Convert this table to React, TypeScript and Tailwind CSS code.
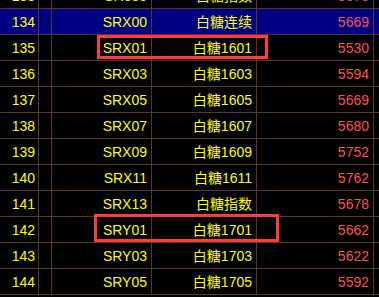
const rows = [
  { no: "133", code: "SR000", name: "白糖指数", price: "5670" },
  { no: "134", code: "SRX00", name: "白糖连续", price: "5669", active: true },
  { no: "135", code: "SRX01", name: "白糖1601", price: "5530" },
  { no: "136", code: "SRX03", name: "白糖1603", price: "5594" },
  { no: "137", code: "SRX05", name: "白糖1605", price: "5669" },
  { no: "138", code: "SRX07", name: "白糖1607", price: "5680" },
  { no: "139", code: "SRX09", name: "白糖1609", price: "5752" },
  { no: "140", code: "SRX11", name: "白糖1611", price: "5762" },
  { no: "141", code: "SRX13", name: "白糖指数", price: "5678" },
  { no: "142", code: "SRY01", name: "白糖1701", price: "5662" },
  { no: "143", code: "SRY03", name: "白糖1703", price: "5622" },
  { no: "144", code: "SRY05", name: "白糖1705", price: "5592" },
];

const cell = "h-full flex items-center justify-end border-r border-[#5a3826]";

export default function App() {
  return (
    <div className="relative w-[379px] h-[297px] overflow-hidden bg-black text-[14px] leading-none text-[#ffff00] font-['Liberation_Sans','Noto_Sans_CJK_SC',sans-serif]">
      <div className="-mt-[17px]">
        {rows.map((r) => (
          <div
            key={r.no}
            className={`flex h-[26px] border-b border-[#5a3826] ${r.active ? "bg-[#000080]" : ""}`}
          >
            <div className={`${cell} w-[39px] pr-[3px]`}>{r.no}</div>
            <div className={`${cell} w-[13px]`} />
            <div className={`${cell} w-[100px] pr-[4px]`}>{r.code}</div>
            <div className={`${cell} w-[105px] pr-[4px]`}>{r.name}</div>
            <div className={`${cell} w-[117px] pr-[4px] text-[#ff5050]`}>{r.price}</div>
          </div>
        ))}
      </div>

      {/* highlight boxes */}
      <div className="absolute left-[97px] top-[35px] w-[171px] h-[24px] border-[3px] border-[#ff3b3b]" />
      <div className="absolute left-[94px] top-[214px] w-[185px] h-[28px] border-[3px] border-[#ff3b3b]" />
    </div>
  );
}
